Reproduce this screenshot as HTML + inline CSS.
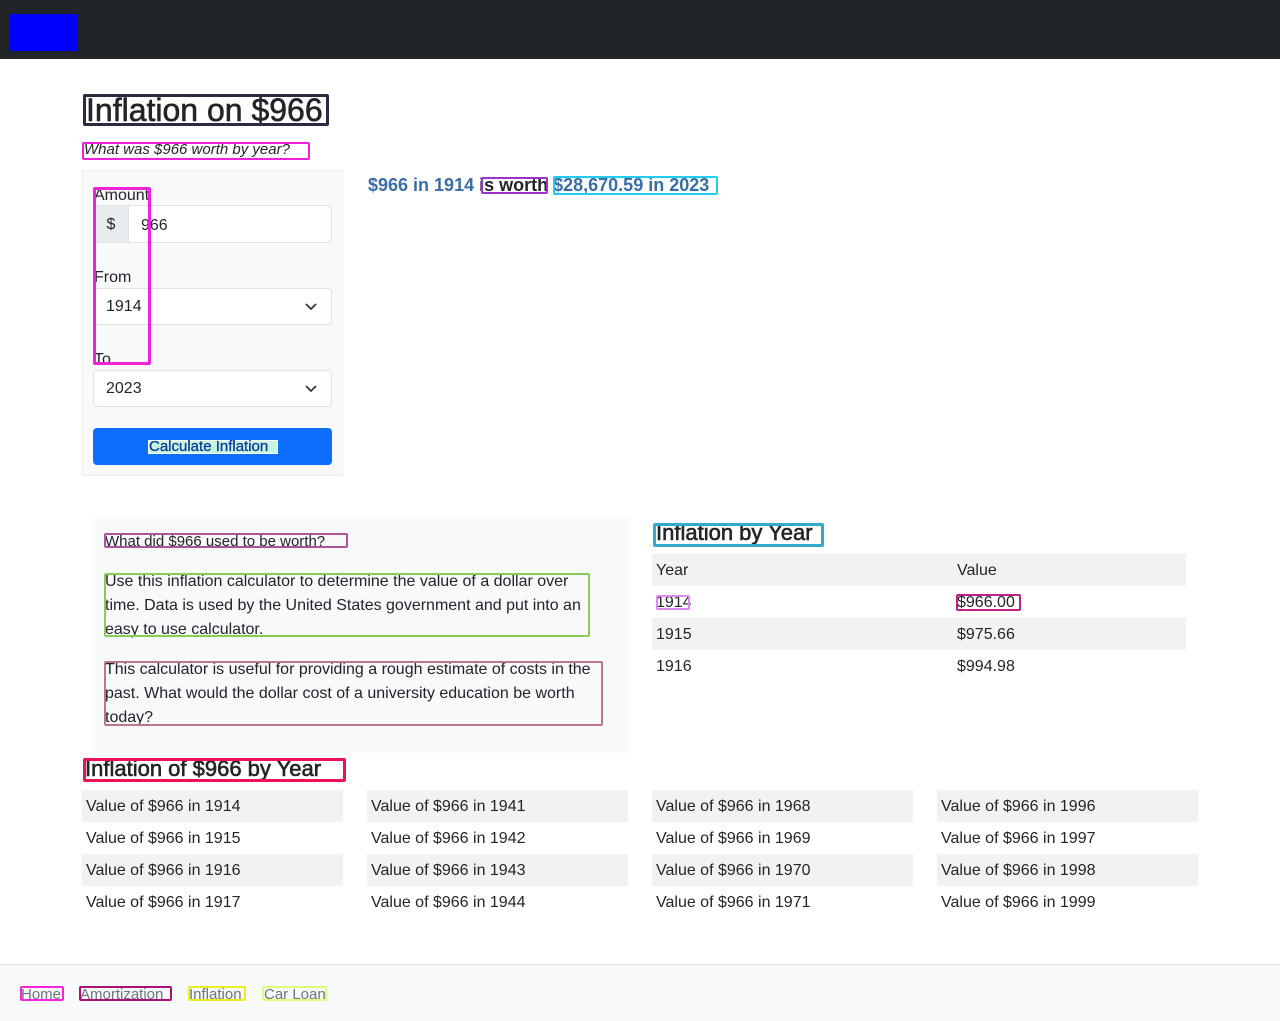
<!DOCTYPE html>
<html><head><meta charset="utf-8"><style>
*{box-sizing:border-box;margin:0;padding:0}
body{width:1280px;height:1021px;position:relative;font-family:"Liberation Sans",sans-serif;color:#212529;background:#fff;overflow:hidden;font-size:16px}
.a{position:absolute;white-space:nowrap}
.h{-webkit-text-stroke:0.6px #212529}
.ob{position:absolute;border:2px solid;border-radius:2px}
.sel{position:absolute;background:#fff;border:1px solid #dee2e6;border-radius:4px;padding-left:12px;padding-top:1px;display:flex;align-items:center;font-size:16px}
.sel svg{position:absolute;right:14px;top:14px}
.row{position:absolute;height:32px;line-height:33px;padding-left:4px;font-size:16px}
.g{background:#f2f2f2}
</style></head><body>
<div style="position:absolute;left:0;top:0;width:1280px;height:59px;background:#212529"></div>
<div style="position:absolute;left:10px;top:14px;width:68px;height:37px;background:#0000ff"></div>

<div class="a h" style="left:86px;top:92px;font-size:32px;">Inflation on $966</div>
<div class="ob" style="left:83px;top:94px;width:246px;height:32px;border-color:#2a2a40;border-width:3px"></div>
<div class="a" style="left:84px;top:141px;font-size:15px;font-style:italic">What was $966 worth by year?</div>
<div class="ob" style="left:82px;top:142px;width:228px;height:18px;border-color:#ee22dd"></div>

<div style="position:absolute;left:82px;top:170px;width:261px;height:306px;background:#f8f9fa;border:1px solid #eceef0"></div>
<div class="a" style="left:94px;top:187px;font-size:16px">Amount</div>
<div style="position:absolute;left:93px;top:205px;width:239px;height:38px;border:1px solid #dee2e6;border-radius:4px;background:#fff"></div>
<div style="position:absolute;left:94px;top:206px;width:35px;height:36px;background:#e9ecef;border-right:1px solid #dee2e6;text-align:center;line-height:38px">$</div>
<div class="a" style="left:141px;top:217px">966</div>
<div class="a" style="left:94px;top:269px">From</div>
<div class="sel" style="left:93px;top:288px;width:239px;height:37px">1914<svg width="12" height="8" viewBox="0 0 12 8"><path d="M1 1l5 5 5-5" fill="none" stroke="#333" stroke-width="1.8"/></svg></div>
<div class="a" style="left:94px;top:351px">To</div>
<div class="sel" style="left:93px;top:370px;width:239px;height:37px">2023<svg width="12" height="8" viewBox="0 0 12 8"><path d="M1 1l5 5 5-5" fill="none" stroke="#333" stroke-width="1.8"/></svg></div>
<div style="position:absolute;left:93px;top:428px;width:239px;height:37px;background:#0d6efd;border-radius:4px"></div>
<div class="a" style="left:148px;top:440px;width:130px;height:14px;background:#c8f5e0;border:1px solid #fff"></div>
<div class="a" style="left:149px;top:438px;color:#0d3a9d;font-size:15px;-webkit-text-stroke:0.3px #0d3a9d">Calculate Inflation</div>
<div class="ob" style="left:93px;top:187px;width:58px;height:178px;border-color:#ee22dd;border-width:3px"></div>

<div class="a" style="left:368px;top:175px;font-size:18px;font-weight:bold;color:#3a6ea5">$966 in 1914 <span style="color:#212529">is worth</span> $28,670.59 in 2023</div>
<div class="ob" style="left:481px;top:177px;width:67px;height:17px;border-color:#9933cc"></div>
<div class="ob" style="left:553px;top:176px;width:165px;height:19px;border-color:#22ccee"></div>

<div style="position:absolute;left:93px;top:517px;width:535px;height:236px;background:#f8f9fa"></div>
<div class="a" style="left:105px;top:533px;font-size:15px">What did $966 used to be worth?</div>
<div class="ob" style="left:104px;top:533px;width:244px;height:15px;border-color:#aa5599"></div>
<div style="position:absolute;left:105px;top:570px;width:490px;line-height:24px;font-size:16px">Use this inflation calculator to determine the value of a dollar over time. Data is used by the United States government and put into an easy to use calculator.</div>
<div class="ob" style="left:104px;top:573px;width:486px;height:64px;border-color:#88cc55"></div>
<div style="position:absolute;left:105px;top:658px;width:500px;line-height:24px;font-size:16px">This calculator is useful for providing a rough estimate of costs in the past. What would the dollar cost of a university education be worth today?</div>
<div class="ob" style="left:104px;top:661px;width:499px;height:65px;border-color:#bb7788"></div>

<div class="a h" style="left:656px;top:520px;font-size:22px">Inflation by Year</div>
<div class="ob" style="left:653px;top:523px;width:171px;height:24px;border-color:#33aacc;border-width:3px"></div>
<div class="row g" style="left:652px;top:554px;width:534px">Year<span style="position:absolute;left:305px">Value</span></div>
<div class="row" style="left:652px;top:586px;width:534px">1914<span style="position:absolute;left:305px">$966.00</span></div>
<div class="row g" style="left:652px;top:618px;width:534px">1915<span style="position:absolute;left:305px">$975.66</span></div>
<div class="row" style="left:652px;top:650px;width:534px">1916<span style="position:absolute;left:305px">$994.98</span></div>
<div class="ob" style="left:656px;top:595px;width:34px;height:15px;border-color:#dd88ee"></div>
<div class="ob" style="left:956px;top:594px;width:65px;height:17px;border-color:#bb2288"></div>

<div class="a h" style="left:85px;top:756px;font-size:22px">Inflation of $966 by Year</div>
<div class="ob" style="left:83px;top:758px;width:263px;height:24px;border-color:#ee1155;border-width:3px"></div>

<div class="row g" style="left:82px;top:790px;width:261px">Value of $966 in 1914</div>
<div class="row" style="left:82px;top:822px;width:261px">Value of $966 in 1915</div>
<div class="row g" style="left:82px;top:854px;width:261px">Value of $966 in 1916</div>
<div class="row" style="left:82px;top:886px;width:261px">Value of $966 in 1917</div>
<div class="row g" style="left:367px;top:790px;width:261px">Value of $966 in 1941</div>
<div class="row" style="left:367px;top:822px;width:261px">Value of $966 in 1942</div>
<div class="row g" style="left:367px;top:854px;width:261px">Value of $966 in 1943</div>
<div class="row" style="left:367px;top:886px;width:261px">Value of $966 in 1944</div>
<div class="row g" style="left:652px;top:790px;width:261px">Value of $966 in 1968</div>
<div class="row" style="left:652px;top:822px;width:261px">Value of $966 in 1969</div>
<div class="row g" style="left:652px;top:854px;width:261px">Value of $966 in 1970</div>
<div class="row" style="left:652px;top:886px;width:261px">Value of $966 in 1971</div>
<div class="row g" style="left:937px;top:790px;width:261px">Value of $966 in 1996</div>
<div class="row" style="left:937px;top:822px;width:261px">Value of $966 in 1997</div>
<div class="row g" style="left:937px;top:854px;width:261px">Value of $966 in 1998</div>
<div class="row" style="left:937px;top:886px;width:261px">Value of $966 in 1999</div>

<div style="position:absolute;left:0;top:964px;width:1280px;height:57px;background:#f8f9fa;border-top:1px solid #e5e5e5"></div>
<div class="a" style="left:21px;top:986px;font-size:15px;color:#6c757d">Home</div>
<div class="ob" style="left:20px;top:986px;width:44px;height:15px;border-color:#ff22dd"></div>
<div class="a" style="left:80px;top:986px;font-size:15px;color:#6c757d">Amortization</div>
<div class="ob" style="left:79px;top:986px;width:93px;height:15px;border-color:#aa1177"></div>
<div class="a" style="left:189px;top:986px;font-size:15px;color:#6c757d">Inflation</div>
<div class="ob" style="left:188px;top:986px;width:58px;height:15px;border-color:#eeee22"></div>
<div class="a" style="left:264px;top:986px;font-size:15px;color:#6c757d">Car Loan</div>
<div class="ob" style="left:262px;top:986px;width:65px;height:15px;border-color:#ddff77"></div>
</body></html>
